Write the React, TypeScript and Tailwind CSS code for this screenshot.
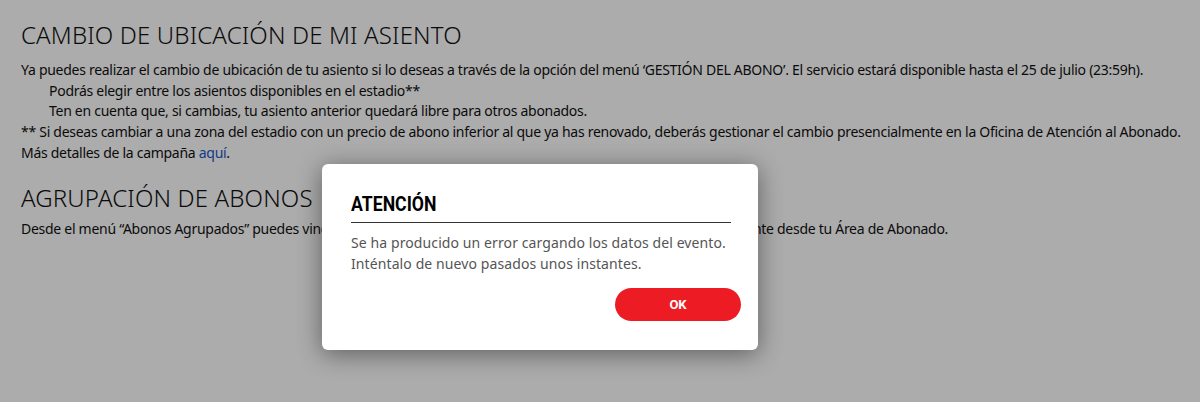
export default function App() {
  return (
    <div className="relative h-[402px] w-[1200px] overflow-hidden bg-white font-['Noto_Sans',sans-serif] text-[#111]">
      <div className="px-[21px] pt-[20px]">
        <h2 className="text-[24px] font-light leading-[30px] tracking-[0.15px]">CAMBIO DE UBICACIÓN DE MI ASIENTO</h2>
        <div className="mt-[10px] text-[14px] leading-[20.7px] tracking-[-0.28px]">
          <p className="whitespace-nowrap">
            Ya puedes realizar el cambio de ubicación de tu asiento si lo deseas a través de la opción del menú ‘GESTIÓN DEL ABONO’. El servicio estará disponible hasta el 25 de julio (23:59h).
          </p>
          <p className="pl-[28px]">Podrás elegir entre los asientos disponibles en el estadio**</p>
          <p className="pl-[28px]">Ten en cuenta que, si cambias, tu asiento anterior quedará libre para otros abonados.</p>
          <p className="whitespace-nowrap">
            ** Si deseas cambiar a una zona del estadio con un precio de abono inferior al que ya has renovado, deberás gestionar el cambio presencialmente en la Oficina de Atención al Abonado.
          </p>
          <p>
            Más detalles de la campaña <a className="text-[#1a56c8]">aquí</a>.
          </p>
        </div>
        <h2 className="mt-[19px] text-[24px] font-light leading-[30px] tracking-[0.15px]">AGRUPACIÓN DE ABONOS</h2>
        <p className="mt-[6px] text-[14px] leading-[20.7px] tracking-[-0.28px]">
          Desde el menú “Abonos Agrupados” puedes vincular tu abono con los de otros abonados y gestionarlos conjuntamente desde tu Área de Abonado.
        </p>
      </div>

      <div className="absolute inset-0 bg-black/[0.325]" />

      <div className="absolute left-[322px] top-[164px] w-[436px] rounded-[6px] bg-white pb-[29px] pl-[29px] pr-[17px] pt-[26px] shadow-[0_4px_24px_rgba(0,0,0,0.45)]">
        <h3 className="origin-left scale-x-[0.84] font-['Roboto',sans-serif] text-[21px] font-bold leading-[28px] text-black">ATENCIÓN</h3>
        <div className="mr-[10px] mt-[4px] h-px bg-[#333]" />
        <div className="mt-[9px] text-[14px] leading-[21px] tracking-[0.1px] text-[#555]">
          <p>Se ha producido un error cargando los datos del evento.</p>
          <p>Inténtalo de nuevo pasados unos instantes.</p>
        </div>
        <div className="mt-[14px] flex justify-end">
          <button className="h-[33px] w-[126px] rounded-full bg-[#ed1c24] font-['Roboto',sans-serif] text-[13px] font-bold text-white">
            OK
          </button>
        </div>
      </div>
    </div>
  );
}
